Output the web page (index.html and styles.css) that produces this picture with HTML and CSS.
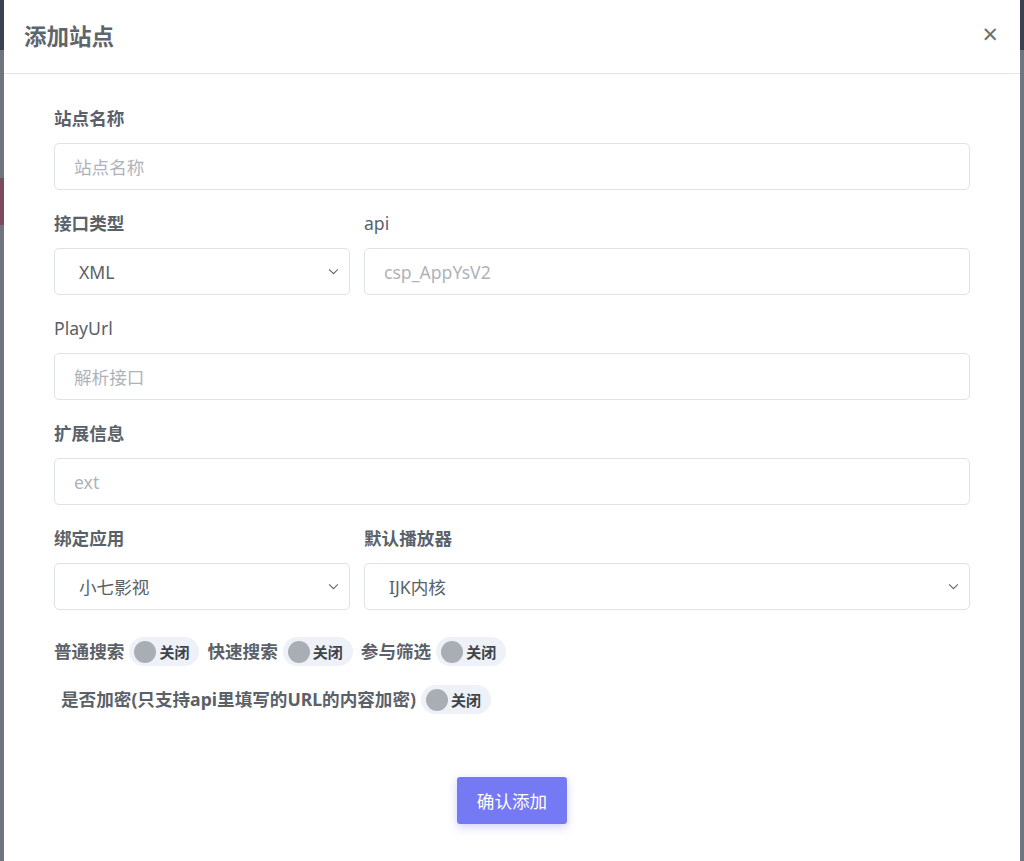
FILE: index.html
```html
<!DOCTYPE html>
<html lang="zh-CN">
<head>
  <meta charset="UTF-8" />
  <meta name="viewport" content="width=device-width, initial-scale=1.0" />
  <title>添加站点</title>
  <link rel="stylesheet" href="styles.css">
</head>
<body>
  <div class="page">
    <div class="page-top"></div>
    <div class="page-mark"></div>
  </div>

  <div class="modal">
    <div class="modal-header">
      <h5 class="modal-title">添加站点</h5>
      <span class="close">&times;</span>
    </div>

    <div class="modal-body">
      <div class="group">
        <label class="label bold">站点名称</label>
        <input class="field" type="text" placeholder="站点名称">
      </div>

      <div class="row">
        <div class="group narrow">
          <label class="label bold">接口类型</label>
          <div class="select">
            <span>XML</span>
            <svg class="chev" viewBox="0 0 12 8" width="11" height="7"><path d="M1 1.5l5 5 5-5" fill="none" stroke="#666" stroke-width="1.2"/></svg>
          </div>
        </div>
        <div class="group wide">
          <label class="label">api</label>
          <input class="field" type="text" placeholder="csp_AppYsV2">
        </div>
      </div>

      <div class="group">
        <label class="label">PlayUrl</label>
        <input class="field" type="text" placeholder="解析接口">
      </div>

      <div class="group">
        <label class="label bold">扩展信息</label>
        <input class="field" type="text" placeholder="ext">
      </div>

      <div class="row">
        <div class="group narrow">
          <label class="label bold">绑定应用</label>
          <div class="select">
            <span>小七影视</span>
            <svg class="chev" viewBox="0 0 12 8" width="11" height="7"><path d="M1 1.5l5 5 5-5" fill="none" stroke="#666" stroke-width="1.2"/></svg>
          </div>
        </div>
        <div class="group wide">
          <label class="label bold">默认播放器</label>
          <div class="select">
            <span>IJK内核</span>
            <svg class="chev" viewBox="0 0 12 8" width="11" height="7"><path d="M1 1.5l5 5 5-5" fill="none" stroke="#666" stroke-width="1.2"/></svg>
          </div>
        </div>
      </div>

      <div class="switches">
        <span class="label bold">普通搜索</span>
        <span class="toggle"><i class="knob"></i>关闭</span>
        <span class="label bold">快速搜索</span>
        <span class="toggle"><i class="knob"></i>关闭</span>
        <span class="label bold">参与筛选</span>
        <span class="toggle"><i class="knob"></i>关闭</span>
      </div>

      <div class="switches second">
        <span class="label bold">是否加密(只支持api里填写的URL的内容加密)</span>
        <span class="toggle"><i class="knob"></i>关闭</span>
      </div>

      <div class="actions">
        <button class="btn-primary">确认添加</button>
      </div>
    </div>
  </div>
</body>
</html>
```

FILE: styles.css
```css
body {
  margin: 0;
  background: #6f757d;
  font-family: "Noto Sans", "Noto Sans CJK SC", sans-serif;
  overflow: hidden;
}

.page {
  height: 861px;
}

.page-top {
  height: 50px;
  background: #3a4150;
}

.page-mark {
  margin-top: 128px;
  width: 300px;
  height: 47px;
  background: #7b4a5f;
}

.modal {
  position: fixed;
  top: 0;
  left: 4px;
  right: 4px;
  bottom: -40px;
  background: #fff;
}

.modal-header {
  display: flex;
  align-items: center;
  justify-content: space-between;
  height: 73px;
  padding: 0 22px 0 20px;
  border-bottom: 1px solid #e2e4e8;
}

.modal-title {
  margin: 0;
  font-size: 22.5px;
  font-weight: 700;
  color: #5f656d;
  padding-bottom: 2px;
}

.close {
  font-size: 27px;
  line-height: 1;
  color: #6b7178;
  padding-bottom: 6px;
}

.modal-body {
  padding: 32px 50px 0 50px;
}

.group {
  margin-bottom: 21px;
}

.row {
  display: flex;
  gap: 14px;
}

.narrow {
  width: 296px;
}

.wide {
  flex: 1;
}

.label {
  display: block;
  font-size: 17.6px;
  line-height: 25px;
  color: #5a6169;
  margin-bottom: 12px;
}

.bold {
  font-weight: 700;
}

.field,
.select {
  box-sizing: border-box;
  width: 100%;
  height: 47px;
  border: 1px solid #dfe2e7;
  border-radius: 5px;
  background: #fff;
  font-family: inherit;
  font-size: 17.6px;
  color: #5a6169;
  padding: 0 19px;
  outline: none;
}

.field::placeholder {
  color: #aeb3ba;
}

.select {
  display: flex;
  align-items: center;
  justify-content: space-between;
  padding: 0 10px 0 24px;
}

.switches {
  display: flex;
  align-items: center;
  gap: 5px;
  margin-top: 6px;
}

.switches .label {
  display: inline;
  margin: 0;
}

.switches.second {
  margin-top: 19px;
  padding-left: 7px;
}

.toggle {
  display: inline-flex;
  align-items: center;
  height: 29px;
  padding: 0 10px 0 5px;
  border-radius: 15px;
  background: #eef1f8;
  font-size: 15px;
  font-weight: 700;
  color: #3f444a;
  margin-right: 3px;
}

.knob {
  width: 22px;
  height: 22px;
  border-radius: 50%;
  background: #a9aeb5;
  margin-right: 3px;
}

.actions {
  display: flex;
  justify-content: center;
  margin-top: 63px;
}

.btn-primary {
  width: 110px;
  height: 47px;
  border: none;
  border-radius: 3px;
  background: #7579f4;
  color: #fff;
  font-family: inherit;
  font-size: 17.6px;
  box-shadow: 0 3px 10px rgba(117, 121, 244, 0.35);
}
```
